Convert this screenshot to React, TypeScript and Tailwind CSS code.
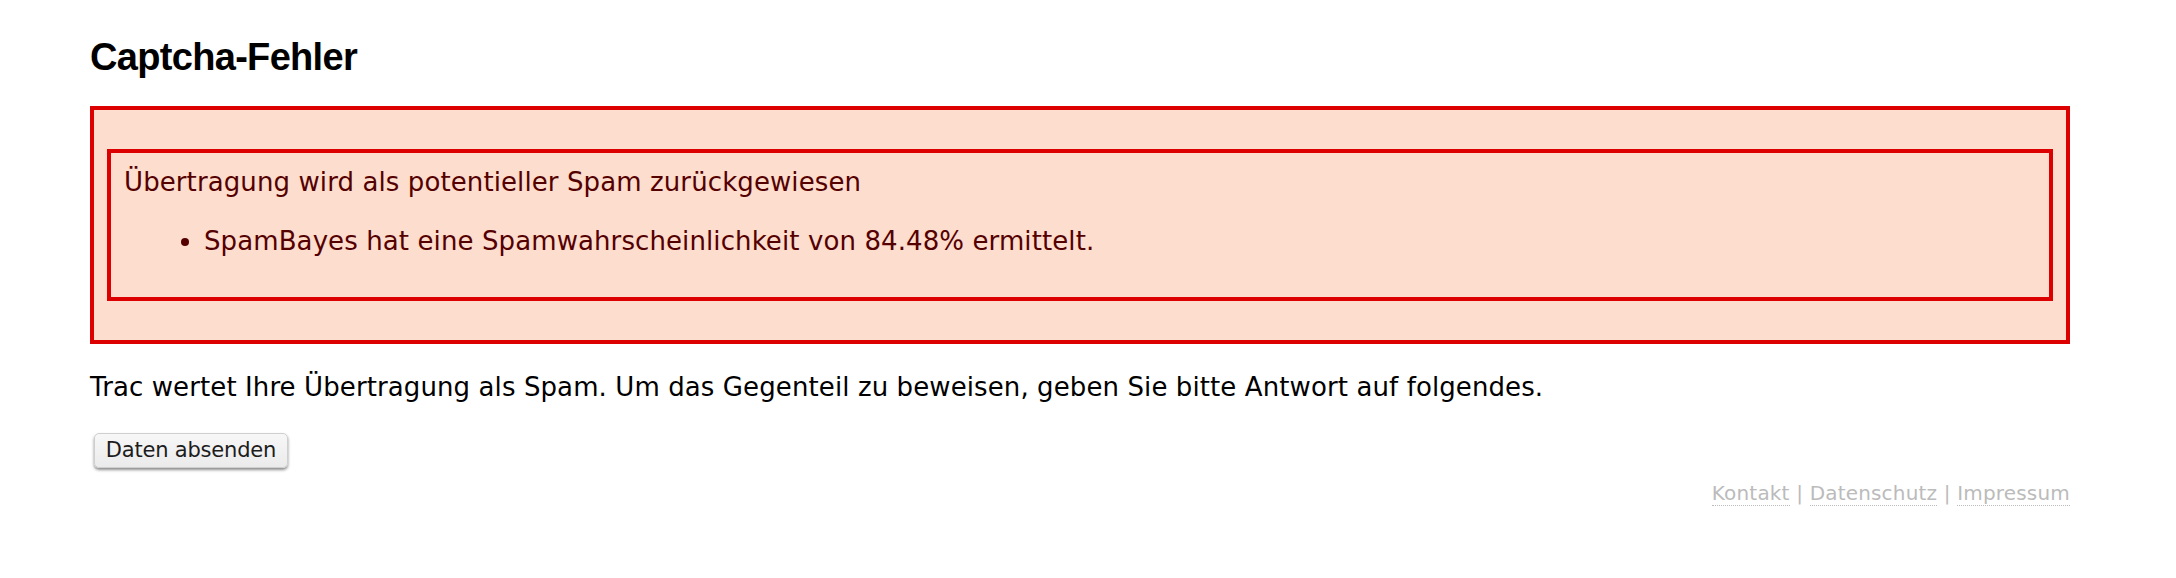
const FooterLink = ({ label }: { label: string }) => (
  <a href="#" className="border-b border-dotted border-[#bbbbbb] text-[#bbbbbb] no-underline">
    {label}
  </a>
);

const App = () => {
  return (
    <div className="min-h-screen bg-white pl-[90px] pr-[106px] pt-[35px] font-['DejaVu_Sans',Verdana,sans-serif] text-[26px] leading-[33px] tracking-[0.1px] text-black">
      <h1 className="mb-[27px] font-['Liberation_Sans',Arial,sans-serif] text-[38px] font-bold leading-[44px] tracking-[-0.018em]">
        Captcha-Fehler
      </h1>

      {/* Error box */}
      <div className="border-4 border-[#dd0000] bg-[#fdddcd] p-[13px] text-[#550000]">
        <div className="my-[26px] border-4 border-[#dd0000] p-[13px]">
          <p>Übertragung wird als potentieller Spam zurückgewiesen</p>
          <ul className="my-[26px] list-disc pl-[80px]">
            <li>SpamBayes hat eine Spamwahrscheinlichkeit von 84.48% ermittelt.</li>
          </ul>
        </div>
      </div>

      <p className="mt-[27px]">
        Trac wertet Ihre Übertragung als Spam. Um das Gegenteil zu beweisen, geben Sie bitte Antwort auf folgendes.
      </p>

      <form className="mt-[29px]" onSubmit={(e) => e.preventDefault()}>
        <button
          type="submit"
          className="ml-[4px] flex h-[35px] w-[194px] items-center justify-center rounded-[5px] border border-[#cfcfcf] bg-gradient-to-b from-[#f7f7f7] to-[#ebebeb] text-[21px] tracking-[-0.2px] text-[#1c1c1c] shadow-[0_2px_3px_rgba(0,0,0,0.45)]"
        >
          Daten absenden
        </button>
      </form>

      {/* Footer */}
      <div className="mt-[13px] text-right text-[20px] leading-[24px] tracking-[0.18px] text-[#bbbbbb]">
        <FooterLink label="Kontakt" /> | <FooterLink label="Datenschutz" /> | <FooterLink label="Impressum" />
      </div>
    </div>
  );
};

export default App;
